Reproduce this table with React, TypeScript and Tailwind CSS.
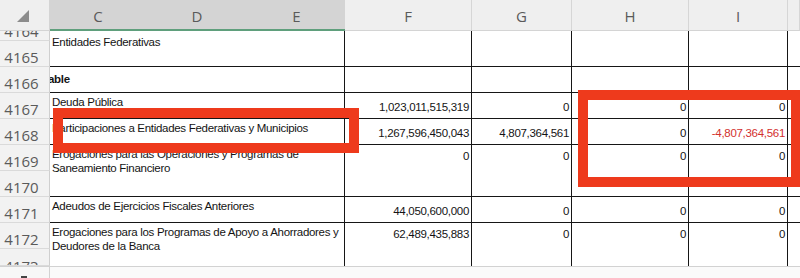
import React from "react";

type Group = "A" | "B" | "C" | "D" | "E" | "F" | "G";
type Col = "ce" | "f" | "g" | "h" | "i" | "j";

const rowCls: Record<Group, string> = {
  A: "row-start-2 row-span-2",
  B: "row-start-4",
  C: "row-start-5",
  D: "row-start-6",
  E: "row-start-7 row-span-2",
  F: "row-start-9",
  G: "row-start-10 row-span-2",
};

const colCls: Record<Col, string> = {
  ce: "col-start-2 col-span-3",
  f: "col-start-5",
  g: "col-start-6",
  h: "col-start-7",
  i: "col-start-8",
  j: "col-start-9",
};

const numPad: Record<Group, string> = {
  A: "pt-[4px]",
  B: "pt-[7px]",
  C: "pt-[7px]",
  D: "pt-[7px]",
  E: "pt-[4px]",
  F: "pt-[7px]",
  G: "pt-[4px]",
};

const groups: Group[] = ["A", "B", "C", "D", "E", "F", "G"];

const nums: Record<Group, [string, string, string, string]> = {
  A: ["", "", "", ""],
  B: ["", "", "", ""],
  C: ["1,023,011,515,319", "0", "0", "0"],
  D: ["1,267,596,450,043", "4,807,364,561", "0", "-4,807,364,561"],
  E: ["0", "0", "0", "0"],
  F: ["44,050,600,000", "0", "0", "0"],
  G: ["62,489,435,883", "0", "0", "0"],
};

const labels: Record<Group, React.ReactNode> = {
  A: <div className="pt-[4px] pl-[2px]">Entidades Federativas</div>,
  B: <div className="pt-[5px] ml-[-2px] font-bold">able</div>,
  C: <div className="pt-[2px] pl-[2px]">Deuda Pública</div>,
  D: (
    <div className="pt-[2px] pl-[2px]">
      Participaciones a Entidades Federativas y Municipios
    </div>
  ),
  E: (
    <div className="pt-[2px] pl-[2px]">
      Erogaciones para las Operaciones y Programas de
      <br />
      Saneamiento Financiero
    </div>
  ),
  F: (
    <div className="pt-[2px] pl-[2px]">
      Adeudos de Ejercicios Fiscales Anteriores
    </div>
  ),
  G: (
    <div className="pt-[2px] pl-[2px]">
      Erogaciones para los Programas de Apoyo a Ahorradores y
      <br />
      Deudores de la Banca
    </div>
  ),
};

const rowHeaders: { n: string; cls: string; align: string }[] = [
  { n: "4164", cls: "row-start-2", align: "items-end" },
  { n: "4165", cls: "row-start-3", align: "items-end" },
  { n: "4166", cls: "row-start-4", align: "items-end" },
  { n: "4167", cls: "row-start-5", align: "items-end" },
  { n: "4168", cls: "row-start-6", align: "items-end" },
  { n: "4169", cls: "row-start-7", align: "items-end" },
  { n: "4170", cls: "row-start-8", align: "items-end" },
  { n: "4171", cls: "row-start-9", align: "items-end" },
  { n: "4172", cls: "row-start-10", align: "items-end" },
  { n: "4173", cls: "row-start-11", align: "items-start pt-[8px]" },
];

const cellFont =
  "font-['Liberation_Sans',Arial,sans-serif] text-[11.5px] leading-[14px] tracking-[-0.3px] text-[#141414]";
const headFont =
  "font-['Open_Sans',sans-serif] text-[15px] leading-[18px] text-[#5a5a5a]";

export default function App() {
  return (
    <div className="relative w-[800px] h-[278px] overflow-hidden bg-white">
      <div className="grid grid-cols-[50px_96px_102px_97px_127px_100px_117px_99px_12px] grid-rows-[31px_10px_repeat(8,26px)_17px_12px] w-[800px] h-[278px]">
        {/* corner */}
        <div className="col-start-1 row-start-1 bg-[#efefef] border-r border-b border-[#d4d4d4] relative">
          <svg
            className="absolute left-[17px] top-[10px]"
            width="12"
            height="12"
            viewBox="0 0 12 12"
          >
            <polygon points="12,0 12,12 0,12" fill="#8c8c8c" />
          </svg>
        </div>
        {/* column headers */}
        {[
          { l: "C", c: "col-start-2", sel: true },
          { l: "D", c: "col-start-3", sel: true },
          { l: "E", c: "col-start-4", sel: true },
          { l: "F", c: "col-start-5", sel: false },
          { l: "G", c: "col-start-6", sel: false },
          { l: "H", c: "col-start-7", sel: false },
          { l: "I", c: "col-start-8", sel: false },
          { l: "", c: "col-start-9", sel: false },
        ].map((h) => (
          <div
            key={h.c}
            className={`${h.c} row-start-1 flex items-center justify-center pt-[2px] ${headFont} ${
              h.sel
                ? "bg-[#d4d4d4] border-b-2 border-b-[#5f9f7c]"
                : "bg-[#efefef] border-b border-b-[#d4d4d4] border-r border-r-[#d6d6d6]"
            }`}
          >
            {h.l}
          </div>
        ))}

        {/* row headers */}
        {rowHeaders.map((r) => (
          <div
            key={r.n}
            className={`col-start-1 ${r.cls} flex ${r.align} justify-center pr-[6px] overflow-hidden bg-[#f2f2f2] border-r border-r-[#cfcfcf] border-b border-b-[#dadada] ${headFont}`}
          >
            <span className="block">{r.n}</span>
          </div>
        ))}

        {/* data cells */}
        {groups.map((g) => {
          const bottom = g === "G" ? "" : "border-b";
          return (
            <React.Fragment key={g}>
              <div
                className={`${colCls.ce} ${rowCls[g]} overflow-hidden whitespace-nowrap border-r ${bottom} border-[#161616] ${cellFont}`}
              >
                {labels[g]}
              </div>
              {(["f", "g", "h", "i"] as Col[]).map((c, idx) => (
                <div
                  key={c}
                  className={`${colCls[c]} ${rowCls[g]} overflow-hidden whitespace-nowrap border-r ${bottom} border-[#161616] text-right pr-[2px] ${numPad[g]} ${cellFont}`}
                >
                  <span
                    className={
                      nums[g][idx].startsWith("-") ? "text-[#d3302e]" : ""
                    }
                  >
                    {nums[g][idx]}
                  </span>
                </div>
              ))}
              <div
                className={`${colCls.j} ${rowCls[g]} ${bottom} border-[#161616]`}
              />
            </React.Fragment>
          );
        })}

        {/* bottom bar */}
        <div className="col-start-1 row-start-12 bg-[#f7f7f7] border-t border-t-[#d2d2d2] border-r border-r-[#d2d2d2] relative">
          <div className="absolute left-[21px] top-[9px] w-[6px] h-[2px] bg-[#444]" />
        </div>
        <div className="col-start-2 col-span-8 row-start-12 bg-[#fafafa] border-t border-t-[#d2d2d2]" />
      </div>

      {/* red annotation rectangles */}
      <div className="absolute left-[53px] top-[108px] w-[306px] h-[45px] border-[10px] border-[#ee3a1c]" />
      <div className="absolute left-[578px] top-[90px] w-[223px] h-[97px] border-[10px] border-[#ee3a1c]" />
    </div>
  );
}
